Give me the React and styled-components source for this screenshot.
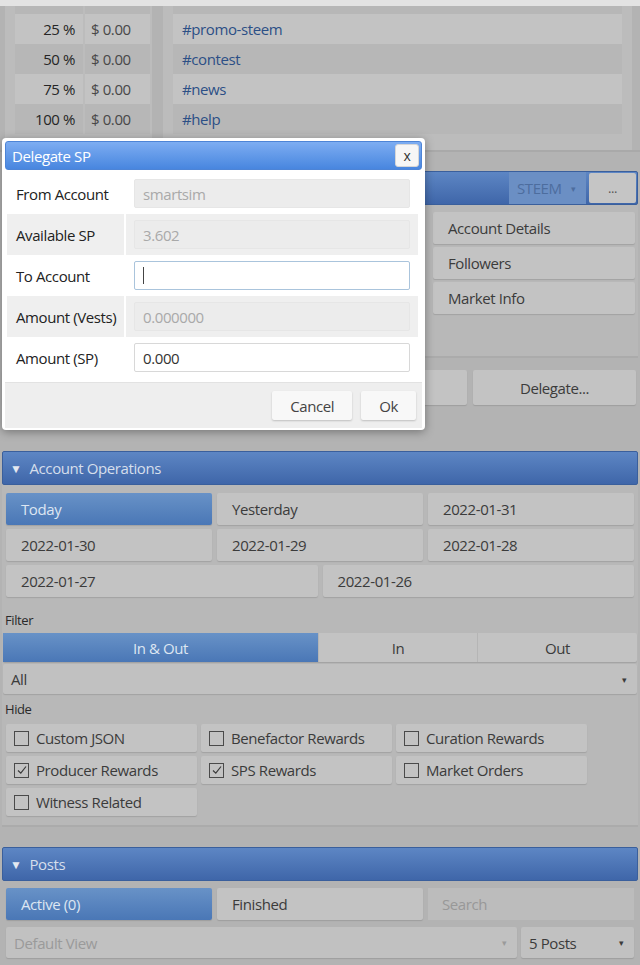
import React from 'react'
import styled, { createGlobalStyle } from 'styled-components'

const GlobalStyle = createGlobalStyle`
  html, body { margin: 0; padding: 0; }
  body {
    background: #b3b3b3;
    font-family: "Open Sans", "Noto Sans", sans-serif;
    letter-spacing: -0.4px;
    color: #3a3a3a;
  }
  * { box-sizing: border-box; }
`

const tags = [
  { pct: '25 %', tag: '#promo-steem' },
  { pct: '50 %', tag: '#contest' },
  { pct: '75 %', tag: '#news' },
  { pct: '100 %', tag: '#help' },
]

const dates = ['Yesterday', '2022-01-31', '2022-01-30', '2022-01-29', '2022-01-28']

const hideOpts = [
  { label: 'Custom JSON', on: false },
  { label: 'Benefactor Rewards', on: false },
  { label: 'Curation Rewards', on: false },
  { label: 'Producer Rewards', on: true },
  { label: 'SPS Rewards', on: true },
  { label: 'Market Orders', on: false },
  { label: 'Witness Related', on: false },
]

const fields = [
  { label: 'From Account', value: 'smartsim', disabled: true },
  { label: 'Available SP', value: '3.602', disabled: true },
  { label: 'To Account', value: '', focus: true },
  { label: 'Amount (Vests)', value: '0.000000', disabled: true },
  { label: 'Amount (SP)', value: '0.000' },
]

function Header({ title, children }) {
  return (
    <HeadBar>
      {title ? (
        <HeadTitle>
          <Caret>▼</Caret>
          {title}
        </HeadTitle>
      ) : <div />}
      {children}
    </HeadBar>
  )
}

function Check({ on }) {
  return (
    <Box>
      {on && (
        <svg width="12" height="12" viewBox="0 0 12 12">
          <path d="M2 6.5 L4.8 9.2 L10 2.5" fill="none" stroke="#3a3a3a" strokeWidth="1.2" />
        </svg>
      )}
    </Box>
  )
}

export default function App() {
  return (
    <Page>
      <GlobalStyle />
      <TopStrip />
      <TagPanel>
        <LeftTable>
          <TableRow $alt>
            <PctCell />
            <ValCell />
          </TableRow>
          {tags.map((t, i) => (
            <TableRow key={t.pct} $alt={i % 2 === 1} $h={30}>
              <PctCell>{t.pct}</PctCell>
              <ValCell>$ 0.00</ValCell>
            </TableRow>
          ))}
        </LeftTable>
        <TagList>
          <TagRow $alt />
          {tags.map((t, i) => (
            <TagRow key={t.tag} $alt={i % 2 === 1} $h={30}>
              <TagLink>{t.tag}</TagLink>
            </TagRow>
          ))}
        </TagList>
      </TagPanel>

      <Section $top={19}>
        <Header>
          <HeadTools>
            <CoinSelect>STEEM <SmallArrow>▾</SmallArrow></CoinSelect>
            <MoreBtn>...</MoreBtn>
          </HeadTools>
        </Header>
        <WalletBody>
          <div />
          <SideMenu>
            <Btn>Account Details</Btn>
            <Btn>Followers</Btn>
            <Btn>Market Info</Btn>
          </SideMenu>
        </WalletBody>
      </Section>
      <DelegateRow>
        <Btn />
        <Btn $center>Delegate...</Btn>
      </DelegateRow>
      <NoData>No data found.</NoData>

      <Section $top={13}>
        <Header title="Account Operations" />
        <OpsBody>
          <DateGrid>
            <Btn $active>Today</Btn>
            {dates.map(d => <Btn key={d}>{d}</Btn>)}
          </DateGrid>
          <DateGrid $cols={2}>
            <Btn>2022-01-27</Btn>
            <Btn>2022-01-26</Btn>
          </DateGrid>
          <Label>Filter</Label>
          <Tabs>
            <Tab $active>In &amp; Out</Tab>
            <Tab>In</Tab>
            <Tab>Out</Tab>
          </Tabs>
          <Select>All <SmallArrow>▾</SmallArrow></Select>
          <Label $tight>Hide</Label>
          <CheckGrid>
            {hideOpts.map(o => (
              <CheckItem key={o.label}>
                <Check on={o.on} />
                {o.label}
              </CheckItem>
            ))}
          </CheckGrid>
        </OpsBody>
      </Section>

      <Section $top={20}>
        <Header title="Posts" />
        <PostsBody>
          <DateGrid>
            <Btn $active>Active (0)</Btn>
            <Btn>Finished</Btn>
            <SearchBox>Search</SearchBox>
          </DateGrid>
          <SelectRow>
            <Select $muted>Default View <SmallArrow>▾</SmallArrow></Select>
            <Select>5 Posts <SmallArrow>▾</SmallArrow></Select>
          </SelectRow>
        </PostsBody>
      </Section>

      <Dialog>
        <TitleBar>
          Delegate SP
          <CloseBtn>x</CloseBtn>
        </TitleBar>
        <Form>
          {fields.map((f, i) => (
            <FormRow key={f.label} $alt={i % 2 === 1}>
              <FieldLabel>{f.label}</FieldLabel>
              <FieldCell>
                <Input $disabled={f.disabled} $focus={f.focus}>
                  {f.focus ? <Cursor /> : f.value}
                </Input>
              </FieldCell>
            </FormRow>
          ))}
        </Form>
        <Footer>
          <DlgBtn>Cancel</DlgBtn>
          <DlgBtn>Ok</DlgBtn>
        </Footer>
      </Dialog>
    </Page>
  )
}

const Page = styled.div`
  position: relative;
  width: 640px;
  min-height: 965px;
  overflow: hidden;
`

const TopStrip = styled.div`
  height: 6px;
  background: #e3e3e3;
`

const TagPanel = styled.div`
  display: flex;
  gap: 11px;
  padding: 0 8px 0 5px;
  height: 146px;
  background: #b3b3b3;
  border-bottom: 2px solid #a9a9a9;
`

const LeftTable = styled.div`
  width: 147px;
  background: #bcbcbc;
  padding: 0 2px 0 10px;
`

const TableRow = styled.div`
  display: flex;
  height: ${p => (p.$h ? p.$h : 8)}px;
  background: ${p => (p.$alt ? '#b7b7b7' : '#c3c3c3')};
  font-size: 15px;
  align-items: center;
`

const PctCell = styled.div`
  width: 70px;
  padding-right: 8px;
  color: #262626;
  align-self: stretch;
  display: flex;
  align-items: center;
  justify-content: flex-end;
  border-right: 2px solid #bcbcbc;
`

const ValCell = styled.div`
  padding-left: 6px;
  color: #484848;
`

const TagList = styled.div`
  flex: 1;
  background: #bcbcbc;
  padding: 0 10px;
`

const TagRow = styled.div`
  height: ${p => (p.$h ? p.$h : 8)}px;
  background: ${p => (p.$alt ? '#b7b7b7' : '#c3c3c3')};
  display: flex;
  align-items: center;
  padding-left: 9px;
`

const TagLink = styled.span`
  font-size: 15px;
  color: #2c4f86;
`

const Section = styled.div`
  margin-top: ${p => p.$top}px;
  padding: 0 2px;
`

const HeadBar = styled.div`
  height: 34px;
  display: flex;
  align-items: center;
  justify-content: space-between;
  background: linear-gradient(#5d86c4, #3f66a9);
  border: 1px solid #3a5f9c;
  border-radius: 2px;
  color: #d6dfec;
`

const HeadTitle = styled.div`
  display: flex;
  align-items: center;
  font-size: 15px;
  padding-left: 7px;
`

const Caret = styled.span`
  font-size: 12px;
  margin-right: 8px;
  color: #e4e9f1;
`

const HeadTools = styled.div`
  display: flex;
  align-self: stretch;
  gap: 3px;
`

const CoinSelect = styled.div`
  width: 77px;
  display: flex;
  align-items: center;
  justify-content: space-between;
  padding: 0 10px 0 8px;
  background: #6b8fc4;
  color: #4d6d9e;
  font-size: 15px;
`

const SmallArrow = styled.span`
  font-size: 9px;
  color: inherit;
`

const MoreBtn = styled.div`
  width: 47px;
  display: flex;
  align-items: center;
  justify-content: center;
  background: #c5c5c5;
  border-radius: 2px;
  margin: 1px 1px 1px 0;
  color: #555;
  font-size: 13px;
`

const WalletBody = styled.div`
  display: grid;
  grid-template-columns: 1fr 202px;
  gap: 6px;
  padding: 7px 3px 0;
  height: 153px;
  background: #b8b8b8;
  border-bottom: 2px solid #ababab;
`

const SideMenu = styled.div`
  display: flex;
  flex-direction: column;
  gap: 3px;
`

const Btn = styled.div`
  height: 32px;
  display: flex;
  align-items: center;
  justify-content: ${p => (p.$center ? 'center' : 'flex-start')};
  padding-left: ${p => (p.$center ? 0 : 15)}px;
  background: ${p => (p.$active ? 'linear-gradient(#6892c7, #4a77b6)' : '#c3c3c3')};
  color: ${p => (p.$active ? '#dde6f2' : '#3b3b3b')};
  border-radius: 2px;
  box-shadow: 0 1px 1px rgba(0, 0, 0, 0.12);
  font-size: 15px;
  white-space: nowrap;
`

const DelegateRow = styled.div`
  display: grid;
  grid-template-columns: 1fr 163px;
  gap: 6px;
  padding: 12px 4px 0 2px;
  & > div { height: 35px; }
`

const NoData = styled.div`
  padding: 6px 0 0 15px;
  font-size: 15px;
  color: #555;
  height: 33px;
`

const OpsBody = styled.div`
  background: #b8b8b8;
  padding: 8px 1px 10px 1px;
  border-bottom: 2px solid #ababab;
  height: 342px;
`

const DateGrid = styled.div`
  display: grid;
  grid-template-columns: repeat(${p => p.$cols || 3}, 1fr);
  gap: 4px 5px;
  padding: 0 3px;
  & + & { margin-top: 4px; }
`

const Label = styled.div`
  font-size: 13px;
  color: #2a2a2a;
  padding: ${p => (p.$tight ? '6px 0 2px 2px' : '14px 0 4px 2px')};
`

const Tabs = styled.div`
  display: grid;
  grid-template-columns: 316px 1fr 1fr;
  height: 29px;
  background: #c3c3c3;
  border-radius: 2px;
  box-shadow: 0 1px 1px rgba(0, 0, 0, 0.12);
`

const Tab = styled.div`
  display: flex;
  align-items: center;
  justify-content: center;
  font-size: 15px;
  border-right: 1px solid #b5b5b5;
  background: ${p => (p.$active ? 'linear-gradient(#6892c7, #4a77b6)' : 'transparent')};
  color: ${p => (p.$active ? '#dde6f2' : '#3b3b3b')};
  &:last-child { border-right: none; }
`

const Select = styled.div`
  height: 30px;
  margin-top: 2px;
  display: flex;
  align-items: center;
  justify-content: space-between;
  padding: 0 10px 0 8px;
  background: #c1c1c1;
  border-radius: 2px;
  box-shadow: 0 1px 1px rgba(0, 0, 0, 0.12);
  font-size: 15px;
  color: ${p => (p.$muted ? '#9a9a9a' : '#3b3b3b')};
`

const CheckGrid = styled.div`
  display: grid;
  grid-template-columns: repeat(3, 191px);
  gap: 4px 4px;
  padding: 4px 3px 0;
`

const CheckItem = styled.div`
  height: 28px;
  display: flex;
  align-items: center;
  gap: 7px;
  padding-left: 8px;
  background: #c3c3c3;
  border-radius: 2px;
  box-shadow: 0 1px 1px rgba(0, 0, 0, 0.12);
  font-size: 15px;
  color: #3b3b3b;
`

const Box = styled.span`
  width: 15px;
  height: 15px;
  border: 1px solid #4a4a4a;
  display: inline-flex;
  align-items: center;
  justify-content: center;
`

const PostsBody = styled.div`
  padding: 7px 1px 0;
`

const SearchBox = styled.div`
  height: 32px;
  display: flex;
  align-items: center;
  padding-left: 14px;
  background: #bcbcbc;
  color: #989898;
  font-size: 15px;
`

const SelectRow = styled.div`
  display: grid;
  grid-template-columns: 1fr 113px;
  gap: 4px;
  padding: 5px 3px 0;
  & > div { height: 31px; }
`

const Dialog = styled.div`
  position: absolute;
  left: 2px;
  top: 138px;
  width: 423px;
  background: #fff;
  border-radius: 4px;
  box-shadow: 0 2px 10px rgba(0, 0, 0, 0.35);
  padding: 3px 3px 2px;
`

const TitleBar = styled.div`
  height: 29px;
  display: flex;
  align-items: center;
  justify-content: space-between;
  padding: 0 2px 0 6px;
  background: linear-gradient(#7dadf2, #4886df);
  border: 1px solid #4d84d6;
  border-radius: 3px;
  color: #fff;
  font-size: 15px;
`

const CloseBtn = styled.div`
  width: 24px;
  height: 23px;
  display: flex;
  align-items: center;
  justify-content: center;
  background: #f6f6f6;
  border: 1px solid #d6d6d6;
  border-radius: 3px;
  color: #333;
  font-size: 14px;
`

const Form = styled.div`
  padding: 3px 4px 4px 2px;
`

const FormRow = styled.div`
  display: grid;
  grid-template-columns: 117px 1fr;
  gap: 2px;
  height: 41px;
  & > div { background: ${p => (p.$alt ? '#efefef' : '#fff')}; }
`

const FieldLabel = styled.div`
  display: flex;
  align-items: center;
  padding-left: 9px;
  font-size: 15px;
  color: #222;
`

const FieldCell = styled.div`
  display: flex;
  align-items: center;
  padding: 0 8px;
`

const Input = styled.div`
  flex: 1;
  height: 29px;
  display: flex;
  align-items: center;
  padding-left: 8px;
  font-size: 15px;
  border-radius: 2px;
  background: ${p => (p.$disabled ? '#ececec' : '#fff')};
  color: ${p => (p.$disabled ? '#a9a9a9' : '#333')};
  border: 1px solid ${p => (p.$focus ? '#aac4dc' : p.$disabled ? '#e6e6e6' : '#d8d8d8')};
`

const Cursor = styled.span`
  width: 1px;
  height: 17px;
  background: #444;
`

const Footer = styled.div`
  height: 46px;
  display: flex;
  align-items: center;
  justify-content: flex-end;
  gap: 9px;
  padding-right: 6px;
  background: #eeeeee;
  border-top: 1px solid #e2e2e2;
`

const DlgBtn = styled.div`
  height: 29px;
  display: flex;
  align-items: center;
  padding: 0 18px;
  background: #f8f8f8;
  border-radius: 2px;
  box-shadow: 0 1px 2px rgba(0, 0, 0, 0.2);
  font-size: 15px;
  color: #444;
`
